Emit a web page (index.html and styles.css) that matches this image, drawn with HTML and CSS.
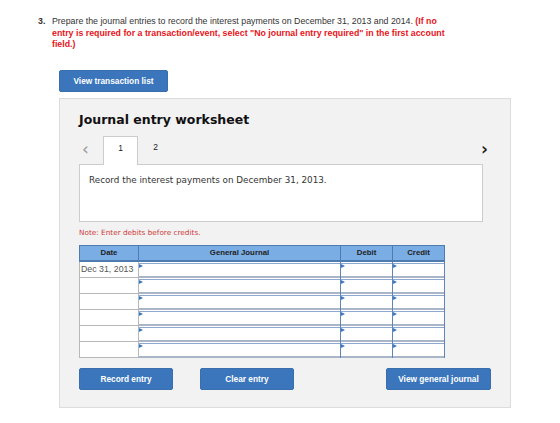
FILE: index.html
```html
<!DOCTYPE html>
<html lang="en">
<head>
    <meta charset="UTF-8">
    <title>Journal entry worksheet</title>
    <link rel="stylesheet" href="styles.css">
</head>
<body>
    <div class="question">
        <span class="qnum">3.</span>
        <p class="qtext">Prepare the journal entries to record the interest payments on December 31, 2013 and 2014. <strong class="warn">(If no entry is required for a transaction/event, select "No journal entry required" in the first account field.)</strong></p>
    </div>

    <button class="btn btn-list">View transaction list</button>

    <div class="worksheet">
        <h2>Journal entry worksheet</h2>

        <div class="tabs">
            <span class="arrow prev">&lsaquo;</span>
            <span class="tab active">1</span>
            <span class="tab">2</span>
            <span class="arrow next">&rsaquo;</span>
        </div>
        <div class="task">Record the interest payments on December 31, 2013.</div>

        <p class="note">Note: Enter debits before credits.</p>

        <table class="journal">
            <thead>
                <tr>
                    <th class="c-date">Date</th>
                    <th class="c-acct">General Journal</th>
                    <th class="c-amt">Debit</th>
                    <th class="c-amt">Credit</th>
                </tr>
            </thead>
            <tbody id="rows"></tbody>
        </table>

        <div class="actions">
            <button class="btn btn-record">Record entry</button>
            <button class="btn btn-clear">Clear entry</button>
            <button class="btn btn-view">View general journal</button>
        </div>
    </div>

    <script>
        const rows = document.getElementById('rows');
        for (let i = 0; i < 6; i++) {
            const date = i === 0 ? 'Dec 31, 2013' : '';
            rows.innerHTML += `<tr>
                <td class="c-date">${date}</td>
                <td class="cell"><div class="field"></div></td>
                <td class="cell"><div class="field"></div></td>
                <td class="cell"><div class="field"></div></td>
            </tr>`;
        }
    </script>
</body>
</html>
```

FILE: styles.css
```css
body {
    margin: 0;
    padding: 16px 0 0 0;
    font-family: "Liberation Sans", Arial, sans-serif;
    background: #fff;
    color: #333;
}
.question {
    display: flex;
    padding-left: 38px;
}
.qnum {
    width: 14px;
    flex-shrink: 0;
    font-size: 8.8px;
    font-weight: bold;
    line-height: 11.5px;
}
.qtext {
    margin: 0;
    width: 395px;
    font-size: 8.8px;
    line-height: 11.5px;
}
.warn {
    color: #e8141b;
}
.btn {
    background-color: #3b76bc;
    color: white;
    border: 1px solid #3a6fae;
    border-radius: 2px;
    font-family: "Liberation Sans", Arial, sans-serif;
    font-weight: bold;
    font-size: 8.3px;
    height: 22px;
    padding: 0;
    cursor: pointer;
}
.btn-list {
    display: block;
    margin: 19px 0 0 59px;
    width: 109px;
}
.worksheet {
    margin: 6px 0 0 59px;
    height: 308px;
    background: #f2f2f2;
    border: 1px solid #dcdcdc;
    padding: 0 0 0 19px;
    box-sizing: content-box;
    width: 431px;
}
.worksheet h2 {
    margin: 12px 0 0 0;
    font-family: "DejaVu Sans", Verdana, sans-serif;
    font-size: 12.5px;
    line-height: 17px;
    color: #111;
}
.tabs {
    display: flex;
    align-items: flex-end;
    margin-top: 8px;
    width: 412px;
    height: 28px;
}
.arrow {
    font-family: "DejaVu Sans", sans-serif;
    font-size: 17px;
    line-height: 26px;
    height: 28px;
}
.prev {
    color: #999;
    width: 24px;
    padding-left: 3px;
    box-sizing: border-box;
}
.next {
    margin-left: auto;
    color: #222;
    font-weight: bold;
    padding-right: 3px;
}
.tab {
    width: 35px;
    height: 28px;
    font-size: 8.5px;
    line-height: 22px;
    text-align: center;
    color: #222;
    box-sizing: border-box;
}
.tab.active {
    background: #fff;
    border: 1px solid #ccc;
    border-bottom: none;
    height: 29px;
    margin-bottom: -1px;
    position: relative;
}
.task {
    width: 404px;
    height: 58px;
    background: #fff;
    border: 1px solid #ccc;
    box-sizing: border-box;
    padding: 10px 9px;
    font-family: "DejaVu Sans", Verdana, sans-serif;
    font-size: 8.8px;
    color: #333;
}
.note {
    margin: 6px 0 0 0;
    font-family: "DejaVu Sans", Verdana, sans-serif;
    font-size: 7.3px;
    line-height: 10px;
    color: #d13b3b;
}
.journal {
    margin-top: 7px;
    border-collapse: collapse;
    width: 366px;
    table-layout: fixed;
}
.journal th {
    background: #79ade4;
    border: 1px solid #4f7cb0;
    border-bottom-width: 2px;
    font-size: 7.8px;
    font-weight: bold;
    color: #222;
    height: 14px;
    padding: 0;
}
.c-date { width: 58px; }
.c-amt { width: 51px; }
.journal td {
    height: 16px;
    padding: 0;
    box-sizing: border-box;
}
.journal td.c-date {
    background: #fff;
    border: 1px solid #b8b8b8;
    font-size: 8.8px;
    color: #555;
    padding-left: 1px;
    white-space: nowrap;
    overflow: hidden;
}
.journal td.cell {
    border-left: 1px solid #5f84b8;
    border-right: 1px solid #5f84b8;
    background: #fff;
}
.field {
    position: relative;
    height: 15px;
    background: #fff;
    border-top: 1px solid #8fa8cf;
    border-bottom: 2px solid #a9b6c8;
    box-sizing: border-box;
    margin-top: 1px;
}
.field::before {
    content: "";
    position: absolute;
    left: 0;
    top: 0;
    border-left: 4px solid #3a76c4;
    border-top: 2px solid transparent;
    border-bottom: 2px solid transparent;
}
.actions {
    display: flex;
    margin-top: 10px;
    width: 412px;
}
.btn-record { width: 94px; }
.btn-clear { width: 94px; margin-left: 27px; }
.btn-view { width: 105px; margin-left: auto; }
```
